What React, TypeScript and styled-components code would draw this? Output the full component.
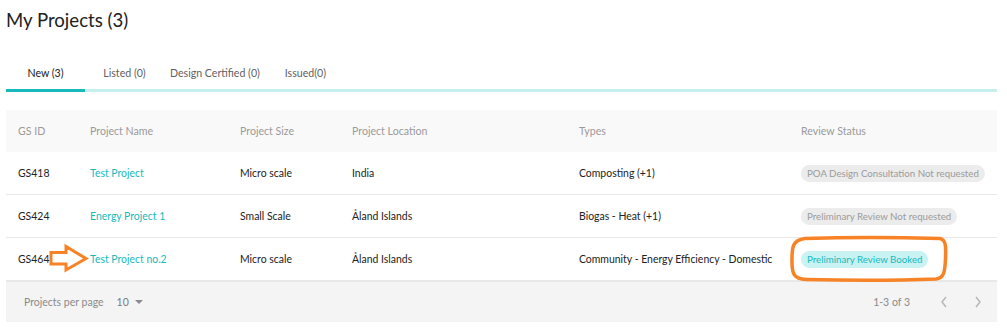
import React, { FC } from 'react';
import styled, { createGlobalStyle, css } from 'styled-components';

const GlobalStyle = createGlobalStyle`
	html, body {
		margin: 0;
		padding: 0;
		background: #ffffff;
	}
	body {
		font-family: Lato, 'Open Sans', sans-serif;
		color: #212121;
	}
`;

const teal = '#17b9bd';

const Page = styled.div`
	position: relative;
	padding: 0 10px 0 6px;
	width: 1007px;
	height: 328px;
	box-sizing: border-box;
`;

const Title = styled.h1`
	margin: 0;
	padding-top: 8px;
	font-size: 18.6px;
	font-weight: 400;
	line-height: 24px;
	color: #212121;
`;

const TabBar = styled.div`
	display: flex;
	margin-top: 33px;
	border-bottom: 3px solid #c6eff0;
`;

interface TabProps {
	active?: boolean;
}

const Tab = styled.div<TabProps>`
	min-width: 79px;
	padding: 0 6px 8px;
	box-sizing: border-box;
	text-align: center;
	font-size: 10.6px;
	line-height: 16px;
	color: #5f5f5f;
	margin-bottom: -3px;
	border-bottom: 3px solid transparent;
	${({ active }) =>
		active &&
		css`
			color: #212121;
			border-bottom-color: ${teal};
		`}
`;

const Table = styled.div`
	margin-top: 18px;
`;

const cols = '72px 150px 112px 227px 222px 1fr';

const HeadRow = styled.div`
	display: grid;
	grid-template-columns: ${cols};
	height: 42px;
	align-items: center;
	background: #f9f9f9;
`;

const HeadCell = styled.div`
	padding-left: 12px;
	font-size: 10.6px;
	color: #9a9a9a;
`;

const Row = styled.div`
	display: grid;
	grid-template-columns: ${cols};
	height: 42px;
	align-items: center;
	border-bottom: 1px solid #e8e8e8;
	&:last-child {
		border-bottom: none;
		height: 43px;
	}
`;

interface CellProps {
	link?: boolean;
}

const Cell = styled.div<CellProps>`
	padding-left: 12px;
	font-size: 10.45px;
	color: ${({ link }) => (link ? teal : '#222222')};
	white-space: nowrap;
`;

interface ChipProps {
	booked?: boolean;
}

const Chip = styled.span<ChipProps>`
	display: inline-block;
	height: 17px;
	line-height: 17px;
	padding: 0 6px;
	border-radius: 9px;
	font-size: 9.7px;
	background: ${({ booked }) => (booked ? '#c9f2f3' : '#ececec')};
	color: ${({ booked }) => (booked ? teal : '#9b9b9b')};
`;

const Footer = styled.div`
	display: flex;
	align-items: center;
	height: 40px;
	background: #f4f4f4;
	border-top: 1px solid #e8e8e8;
	padding: 0 15px 0 18px;
	font-size: 10.5px;
	color: #8a8a8a;
`;

const PerPage = styled.div`
	display: flex;
	align-items: center;
	gap: 13px;
	flex: 1;
`;

const Select = styled.div`
	display: flex;
	align-items: center;
	gap: 6px;
	color: #7a7a7a;
`;

const Caret = styled.span`
	width: 0;
	height: 0;
	border-left: 4px solid transparent;
	border-right: 4px solid transparent;
	border-top: 4px solid #8a8a8a;
`;

const Range = styled.span`
	margin-right: 30px;
`;

const Pager = styled.div`
	display: flex;
	align-items: center;
	gap: 26px;
`;

const Overlay = styled.svg`
	position: absolute;
	left: 0;
	top: 0;
	pointer-events: none;
`;

interface Project {
	id: string;
	name: string;
	size: string;
	location: string;
	types: string;
	status: string;
	booked?: boolean;
}

const projects: Project[] = [
	{ id: 'GS418', name: 'Test Project', size: 'Micro scale', location: 'India', types: 'Composting (+1)', status: 'POA Design Consultation Not requested' },
	{ id: 'GS424', name: 'Energy Project 1', size: 'Small Scale', location: 'Åland Islands', types: 'Biogas - Heat (+1)', status: 'Preliminary Review Not requested' },
	{ id: 'GS464', name: 'Test Project no.2', size: 'Micro scale', location: 'Åland Islands', types: 'Community - Energy Efficiency - Domestic', status: 'Preliminary Review Booked', booked: true },
];

const headers = ['GS ID', 'Project Name', 'Project Size', 'Project Location', 'Types', 'Review Status'];

const Chevron: FC<{ dir: 'left' | 'right' }> = ({ dir }) => (
	<svg width="8" height="12" viewBox="0 0 8 12">
		<path
			d={dir === 'left' ? 'M6 1 L2 6 L6 11' : 'M2 1 L6 6 L2 11'}
			fill="none"
			stroke="#b5b5b5"
			strokeWidth="1.4"
		/>
	</svg>
);

const App: FC = () => {
	return (
		<Page>
			<GlobalStyle />
			<Title>My Projects (3)</Title>
			<TabBar>
				<Tab active>New (3)</Tab>
				<Tab>Listed (0)</Tab>
				<Tab>Design Certified (0)</Tab>
				<Tab>Issued(0)</Tab>
			</TabBar>
			<Table>
				<HeadRow>
					{headers.map((h) => (
						<HeadCell key={h}>{h}</HeadCell>
					))}
				</HeadRow>
				{projects.map((p) => (
					<Row key={p.id}>
						<Cell>{p.id}</Cell>
						<Cell link>{p.name}</Cell>
						<Cell>{p.size}</Cell>
						<Cell>{p.location}</Cell>
						<Cell>{p.types}</Cell>
						<Cell>
							<Chip booked={p.booked}>{p.status}</Chip>
						</Cell>
					</Row>
				))}
				<Footer>
					<PerPage>
						Projects per page
						<Select>
							10
							<Caret />
						</Select>
					</PerPage>
					<Range>1-3 of 3</Range>
					<Pager>
						<Chevron dir="left" />
						<Chevron dir="right" />
					</Pager>
				</Footer>
			</Table>
			{/* hand-drawn annotations */}
			<Overlay width="1007" height="328">
				<path
					d="M51 252.5 L66 252.5 L66 246.5 L86 258.5 L66 270 L66 264 L51 264 Z"
					fill="#ffffff"
					stroke="#f78326"
					strokeWidth="3"
					strokeLinejoin="miter"
				/>
				<path
					d="M805 238.5 C850 237 905 237.5 940 238.5 C946 240 946 246 945.5 258 C945 272 944 278 936 279 C900 280.5 845 280.5 806 279.5 C794 279 792 274 792 262 C792 250 791 240 805 238.5 Z"
					fill="none"
					stroke="#f78326"
					strokeWidth="3.5"
				/>
			</Overlay>
		</Page>
	);
};

export default App;
